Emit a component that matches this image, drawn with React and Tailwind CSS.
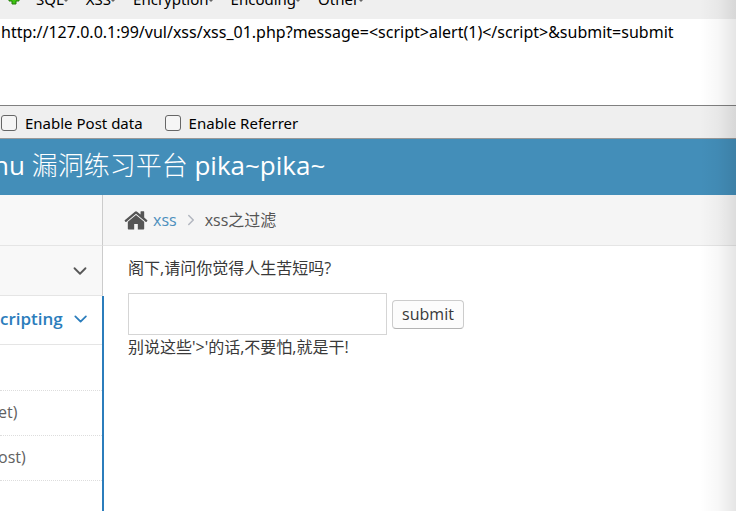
import { ChevronDown, ChevronRight } from 'lucide-react'

const MENUS = ['SQL', 'XSS', 'Encryption', 'Encoding', 'Other']

function HomeIcon() {
  return (
    <svg viewBox="64 160 1664 1408" className="h-5 w-6 shrink-0" fill="#555" aria-hidden>
      <path d="M1472 992v480q0 26-19 45t-45 19h-384v-384h-256v384h-384q-26 0-45-19t-19-45v-480q0-1 .5-3t.5-3l575-474 575 474q1 2 1 6zm223-69l-62 74q-8 9-21 11h-3q-13 0-21-7l-692-577-692 577q-12 8-24 7-13-2-21-11l-62-74q-8-10-7-23.5t11-21.5l719-599q32-26 76-26t76 26l244 204v-195q0-14 9-23t23-9h192q14 0 23 9t9 23v408l219 182q10 8 11 21.5t-7 23.5z" />
    </svg>
  )
}

function PlusIcon() {
  return (
    <svg viewBox="0 0 12 12" className="mr-4 h-3 w-3" aria-hidden>
      <path d="M4 1h4v3h3v4H8v3H4V8H1V4h3z" fill="#3fc512" stroke="#237d08" strokeLinejoin="round" />
    </svg>
  )
}

function HackBar() {
  return (
    <div className="font-['Noto_Sans','Noto_Sans_CJK_SC',sans-serif] text-black">
      <div className="h-[19px] overflow-hidden bg-[#efefef] pl-2">
        <div className="-mt-[11px] flex h-5 items-center">
          <PlusIcon />
          {MENUS.map((menu) => (
            <button key={menu} type="button" className="mr-[18px] flex items-center text-[15px] leading-5">
              {menu}
              <span className="mt-1 h-0 w-0 border-x-2 border-t-2 border-x-transparent border-t-[#666]" />
            </button>
          ))}
        </div>
      </div>
      <textarea
        aria-label="URL"
        className="block h-[87px] w-full resize-none border-b border-[#808080] bg-white px-px pt-px text-base leading-6 outline-none"
        defaultValue="http://127.0.0.1:99/vul/xss/xss_01.php?message=<script>alert(1)</script>&submit=submit"
      />
      <div className="flex h-[33px] items-center gap-[22px] border-b border-[#999] bg-[#efefef] pl-px pt-px">
        <Option label="Enable Post data" />
        <Option label="Enable Referrer" />
      </div>
    </div>
  )
}

function Option({ label }) {
  return (
    <label className="flex items-center gap-2 text-[15px] leading-6">
      <input type="checkbox" className="h-4 w-4 appearance-none rounded-[3px] border border-[#666] bg-[#f5f5f5]" />
      {label}
    </label>
  )
}

function Sidebar() {
  return (
    <nav className="flex w-[104px] shrink-0 flex-col overflow-hidden">
      <div className="mr-px h-[51px] border-r border-b border-r-[#ccc] border-b-[#e5e5e5] bg-[#f8f8f8]" />
      <div className="mr-px flex h-[50px] items-center justify-end border-r border-b border-r-[#ccc] border-b-[#e5e5e5] bg-[#f8f8f8] pr-[11px]">
        <button type="button" aria-label="Expand">
          <ChevronDown size={22} strokeWidth={2} color="#585858" />
        </button>
      </div>
      <div className="flex-1 border-r-2 border-[#2b7dbc]">
        <button
          type="button"
          className="flex h-[49px] w-full items-center justify-end gap-[7px] border-b border-[#e5e5e5] pr-[11px] pb-[3px] text-[17px] font-semibold text-[#2b7dbc]"
        >
          cripting
          <ChevronDown size={22} strokeWidth={2} />
        </button>
        <ul className="text-base text-[#616161]">
          <li className="h-[46px] border-b border-dotted border-[#ddd]" />
          <li className="flex h-[45px] items-center border-b border-dotted border-[#ddd] pb-[2px]">
            <a href="#get" className="-ml-[2px]">et)</a>
          </li>
          <li className="flex h-[45px] items-center border-b border-dotted border-[#ddd] pb-[2px]">
            <a href="#post" className="-ml-[2px]">ost)</a>
          </li>
        </ul>
      </div>
    </nav>
  )
}

function Content() {
  return (
    <main className="flex-1 text-[#393939]">
      <div className="-ml-px flex h-[51px] items-center border-b border-[#e5e5e5] bg-[#f5f5f5] pl-[21px] text-base text-[#555]">
        <HomeIcon />
        <a href="#xss" className="ml-[5px] text-[#4c8fbd]">xss</a>
        <ChevronRight size={18} color="#b2b6bf" className="mx-[5px]" />
        <span>xss之过滤</span>
      </div>
      <form className="px-6 pt-[10px]" onSubmit={(e) => e.preventDefault()}>
        <label htmlFor="message" className="block text-base leading-6">
          阁下,请问你觉得人生苦短吗?
        </label>
        <div className="mt-[13px] flex items-center gap-[5px]">
          <input
            id="message"
            type="text"
            className="h-[42px] w-[259px] border border-[#d5d5d5] bg-white px-2 text-base outline-none"
          />
          <button
            type="submit"
            className="h-[29px] w-[72px] rounded border border-[#ccc] border-b-[#b3b3b3] bg-[#fcfcfc] text-base leading-5"
          >
            submit
          </button>
        </div>
        <p className="text-base leading-6">别说这些'&gt;'的话,不要怕,就是干!</p>
      </form>
    </main>
  )
}

export default function App() {
  return (
    <div className="relative flex min-h-screen flex-col overflow-hidden bg-white font-['Open_Sans','Noto_Sans_CJK_SC',sans-serif]">
      <HackBar />
      <header className="flex h-14 items-center overflow-hidden bg-[#438eb9] pb-1 text-[26px] whitespace-nowrap text-white">
        <h1 className="-ml-[7px]">
          nu <span className="font-light">漏洞练习平台</span> pika~pika~
        </h1>
      </header>
      <div className="flex flex-1">
        <Sidebar />
        <Content />
      </div>
      <div className="pointer-events-none absolute inset-y-0 right-0 w-9 bg-linear-to-l from-black/10 via-black/3 to-transparent" />
    </div>
  )
}
